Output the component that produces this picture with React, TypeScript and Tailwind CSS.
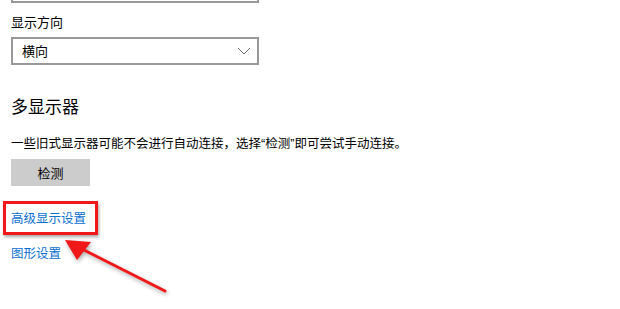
import React from "react"

const font = { fontFamily: '"Microsoft YaHei", "Noto Sans CJK SC", "Noto Sans", sans-serif' }
const latin = { fontFamily: '"Liberation Sans", sans-serif' }

function Chevron() {
  return (
    <svg width="14" height="8" viewBox="0 0 14 8" className="text-[#666]">
      <path d="M1 1 L7 7 L13 1" fill="none" stroke="currentColor" strokeWidth="1" />
    </svg>
  )
}

function Arrow() {
  // annotation arrow pointing up-left at the link
  return (
    <svg
      className="absolute left-0 top-0 pointer-events-none"
      width="620"
      height="309"
      style={{ filter: "drop-shadow(1px 2px 2px rgba(0,0,0,0.35))" }}
    >
      <line x1="165" y1="291" x2="80" y2="248" stroke="#f01818" strokeWidth="3" strokeLinecap="round" />
      <polygon points="65,240 91,242 77,260" fill="#f01818" />
    </svg>
  )
}

export default function App() {
  return (
    <div className="relative w-[620px] h-[309px] overflow-hidden bg-white text-black" style={font}>
      <div className="pl-[11px]">
        <div className="w-[248px] h-[3px] border-x-2 border-b-2 border-[#999]" />

        <div className="mt-[10px] text-[13px] leading-[18px]">显示方向</div>

        <div className="mt-[6px] w-[248px] h-[28px] border-2 border-[#999] flex items-center justify-between pl-[9px] pr-[6px]">
          <span className="text-[13px]">横向</span>
          <Chevron />
        </div>

        <div className="mt-[29px] text-[17px] leading-[24px]">多显示器</div>

        <div className="mt-[16px] text-[12.5px] leading-[18px] whitespace-nowrap">
          一些旧式显示器可能不会进行自动连接，选择<span style={latin}>“</span>检测<span style={latin}>”</span>即可尝试手动连接。
        </div>

        <div className="mt-[6px] w-[79px] h-[27px] bg-[#cccccc] flex items-center justify-center text-[13px]">
          检测
        </div>

        <div className="mt-[23px] relative">
          <div className="text-[12.5px] leading-[18px] text-[#0a6fd1]">高级显示设置</div>
          <div className="absolute left-[-8px] top-[-8px] w-[95px] h-[34px] border-[3px] border-[#f01818] shadow-[1px_2px_3px_rgba(0,0,0,0.35)]" />
        </div>

        <div className="mt-[17px] text-[12.5px] leading-[18px] text-[#0a6fd1]">图形设置</div>
      </div>
      <Arrow />
    </div>
  )
}
